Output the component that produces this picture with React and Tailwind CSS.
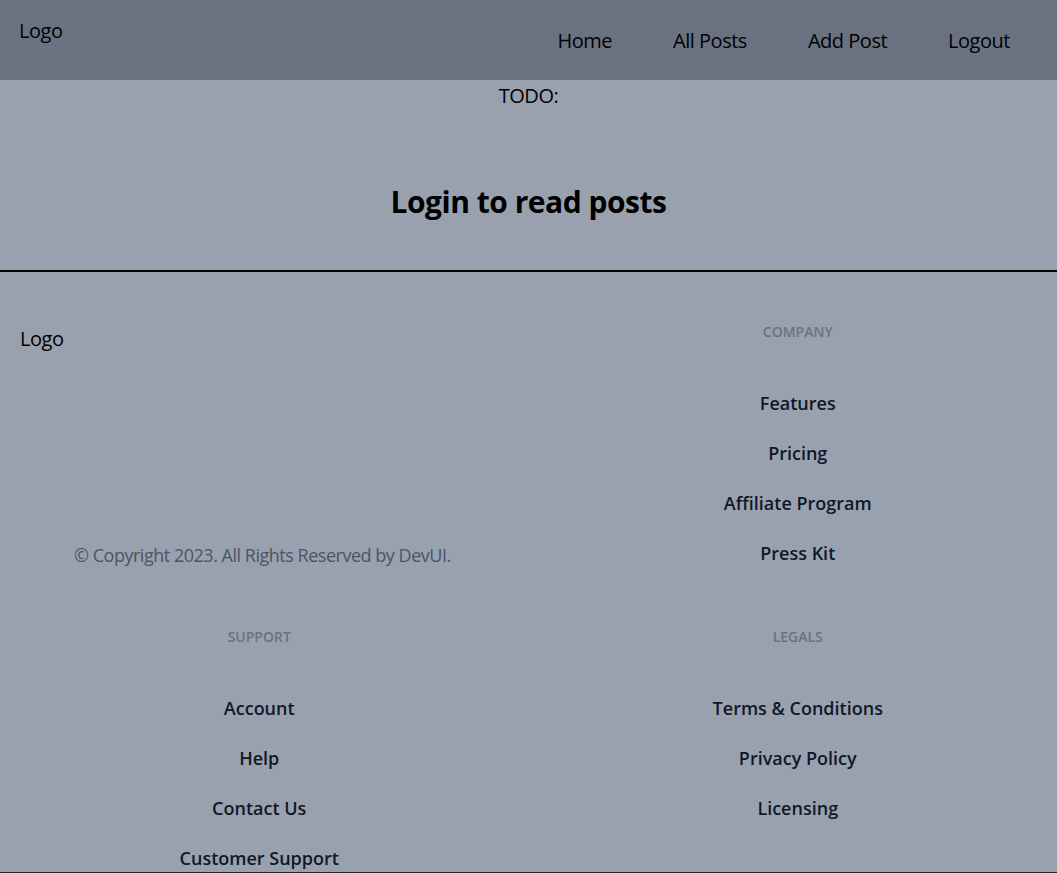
export default function App() {
  const company = ["Features", "Pricing", "Affiliate Program", "Press Kit"];
  const support = ["Account", "Help", "Contact Us", "Customer Support"];
  const legals = ["Terms & Conditions", "Privacy Policy", "Licensing"];

  const Column = ({ title, links }) => (
    <div className="flex flex-col items-center tracking-normal">
      <h2 className="text-sm font-semibold uppercase text-gray-500 leading-5">{title}</h2>
      <ul className="mt-[47px] flex flex-col items-center gap-[22px]">
        {links.map((l) => (
          <li key={l} className="text-lg font-semibold text-gray-900 leading-7">
            {l}
          </li>
        ))}
      </ul>
    </div>
  );

  return (
    <div className="min-h-screen bg-gray-400 font-['Open_Sans',sans-serif] tracking-[-0.03em] text-black">
      <header className="h-20 bg-gray-500 flex justify-between px-[19px]">
        <div className="text-xl pt-[17px]">Logo</div>
        <nav className="flex gap-[61px] pt-[27px] pr-7">
          <a className="text-xl">Home</a>
          <a className="text-xl">All Posts</a>
          <a className="text-xl">Add Post</a>
          <a className="text-xl">Logout</a>
        </nav>
      </header>

      <div className="text-center text-xl leading-8">TODO:</div>
      <div className="h-[158px] flex items-center justify-center">
        <h1 className="text-3xl font-bold pt-[22px]">Login to read posts</h1>
      </div>

      <footer className="border-t-2 border-black pt-[50px] border-b-2 border-b-[#2a2626]">
        <div className="grid grid-cols-2 gap-x-5">
          <div className="flex flex-col justify-between -mb-[2px]">
            <div className="text-xl pl-5 mt-[3px]">Logo</div>
            <p className="text-lg text-gray-600 pl-[74px]">
              © Copyright 2023. All Rights Reserved by DevUI.
            </p>
          </div>
          <Column title="Company" links={company} />
          <div className="mt-[60px]">
            <Column title="Support" links={support} />
          </div>
          <div className="mt-[60px]">
            <Column title="Legals" links={legals} />
          </div>
        </div>
      </footer>
    </div>
  );
}
